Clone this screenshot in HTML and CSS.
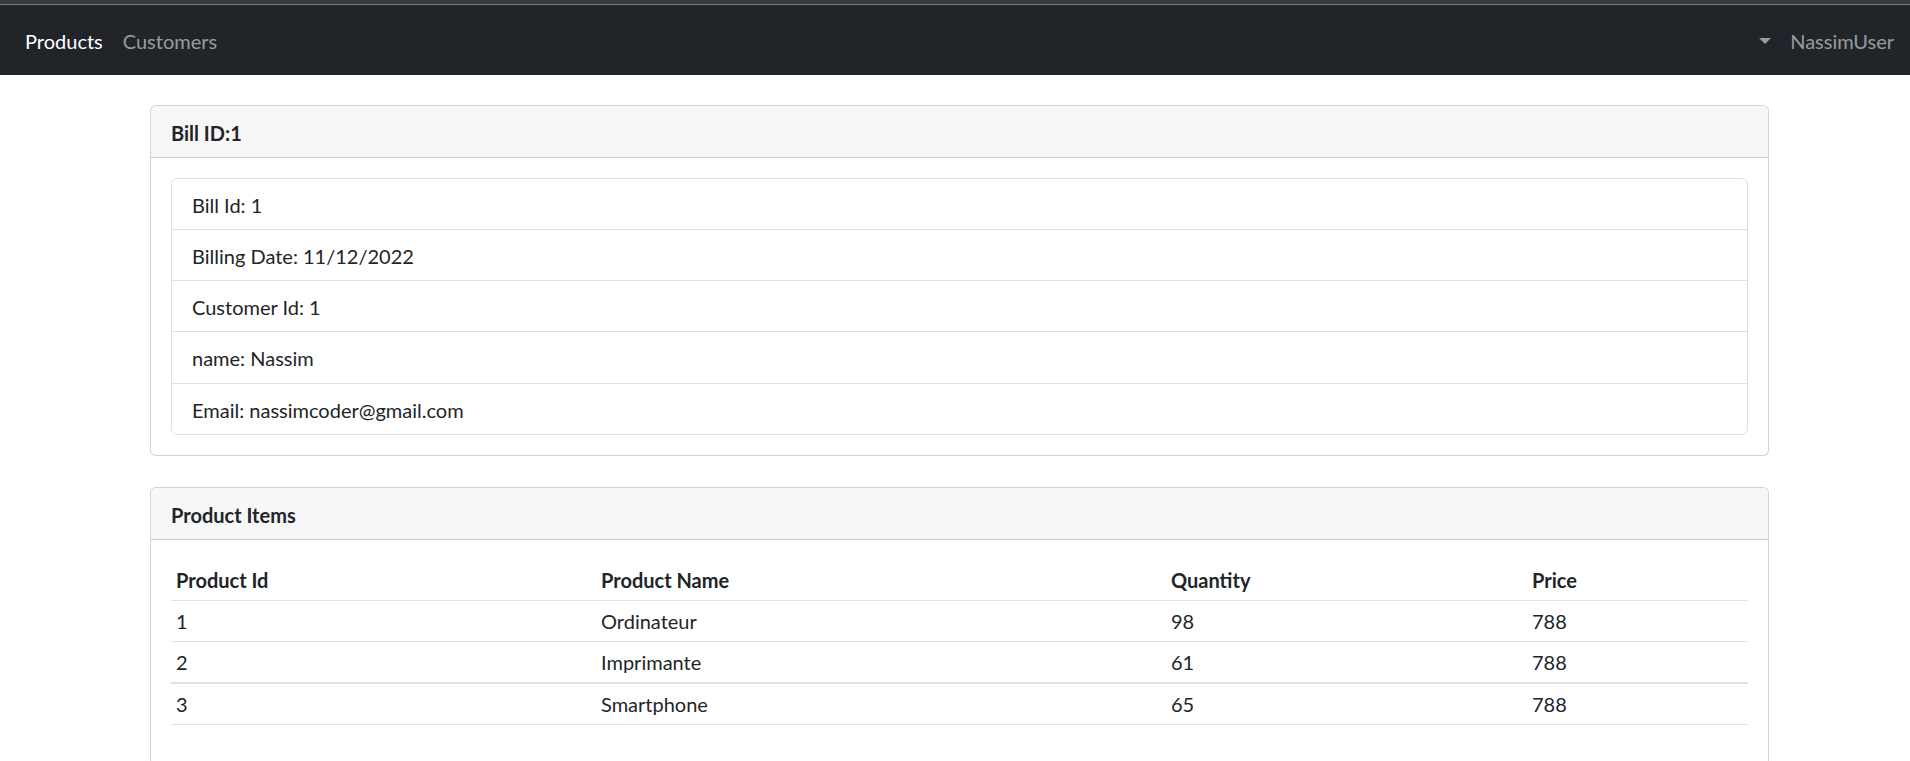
FILE: index.html
```html
<!DOCTYPE html>
<html lang="en">
<head>
<meta charset="utf-8">
<title>Bill</title>
<link rel="stylesheet" href="styles.css">
</head>
<body>
<div class="topstrip"></div>
<nav class="navbar">
  <div class="nav-left">
    <a class="nav-link active" href="#">Products</a>
    <a class="nav-link" href="#">Customers</a>
  </div>
  <div class="nav-right">
    <span class="caret"></span>
    <a class="nav-link user" href="#">NassimUser</a>
  </div>
</nav>
<main class="container">
  <section class="card">
    <div class="card-header">Bill ID:1</div>
    <div class="card-body">
      <ul class="list-group">
        <li class="list-item">Bill Id: 1</li>
        <li class="list-item">Billing Date: 11/12/2022</li>
        <li class="list-item">Customer Id: 1</li>
        <li class="list-item">name: Nassim</li>
        <li class="list-item">Email: nassimcoder@gmail.com</li>
      </ul>
    </div>
  </section>
  <section class="card">
    <div class="card-header">Product Items</div>
    <div class="card-body">
      <table class="table">
        <thead>
          <tr><th class="c1">Product Id</th><th class="c2">Product Name</th><th class="c3">Quantity</th><th class="c4">Price</th></tr>
        </thead>
        <tbody>
          <tr><td>1</td><td>Ordinateur</td><td>98</td><td>788</td></tr>
          <tr class="row-thick"><td>2</td><td>Imprimante</td><td>61</td><td>788</td></tr>
          <tr><td>3</td><td>Smartphone</td><td>65</td><td>788</td></tr>
        </tbody>
      </table>
    </div>
  </section>
</main>
</body>
</html>
```
FILE: styles.css
```css
* { box-sizing: border-box; }
html, body { margin: 0; padding: 0; }
body {
  font-family: "Lato", "Open Sans", "Noto Sans", sans-serif;
  font-size: 20px;
  line-height: 30px;
  color: #212529;
  background: #fff;
  overflow: hidden;
}
.topstrip {
  height: 5px;
  background: #3a3a3a;
  border-bottom: 1px solid #7c7c7c;
}
.navbar {
  height: 70px;
  background: #212529;
  display: flex;
  align-items: center;
  justify-content: space-between;
  padding: 1px 16px 0 15px;
}
.nav-left, .nav-right { display: flex; align-items: center; }
.nav-link {
  color: rgba(255,255,255,.55);
  text-decoration: none;
  padding: 10px 10px;
  font-size: 20px;
  line-height: 30px;
}
.nav-link.active { color: #fff; }
.nav-link.user { padding-right: 0; padding-left: 19px; }
.caret {
  width: 0; height: 0;
  border-left: 6px solid transparent;
  border-right: 6px solid transparent;
  border-top: 6px solid rgba(255,255,255,.55);
  margin-top: 0;
}
.container {
  width: 1619px;
  margin-left: 150px;
  padding-top: 30px;
  display: flex;
  flex-direction: column;
  gap: 31px;
}
.card {
  border: 1px solid rgba(0,0,0,.175);
  border-radius: 6px;
  background: #fff;
}
.card-header {
  background: #f7f7f7;
  border-bottom: 1px solid rgba(0,0,0,.175);
  padding: 12px 20px 9px;
  font-weight: 700;
  border-radius: 6px 6px 0 0;
}
.card-body { padding: 20px; }
.list-group {
  list-style: none;
  margin: 0;
  padding: 0;
  border: 1px solid rgba(0,0,0,.125);
  border-radius: 6px;
}
.list-item {
  padding: 11px 20px 9px;
  border-top: 1px solid rgba(0,0,0,.125);
  line-height: 30px;
}
.list-item:nth-child(4) { padding-bottom: 10px; }
.list-item:first-child { border-top: none; }
.table {
  width: 100%;
  border-collapse: collapse;
  margin-bottom: 20px;
}
.table th, .table td {
  text-align: left;
  padding: 5px;
  border-bottom: 1px solid #dee2e6;
  line-height: 30px;
}
.table th { font-weight: 700; }
.table .c1 { width: 425px; }
.table .c2 { width: 570px; }
.table .c3 { width: 361px; }
.table .row-thick td { border-bottom-width: 2px; }
```
